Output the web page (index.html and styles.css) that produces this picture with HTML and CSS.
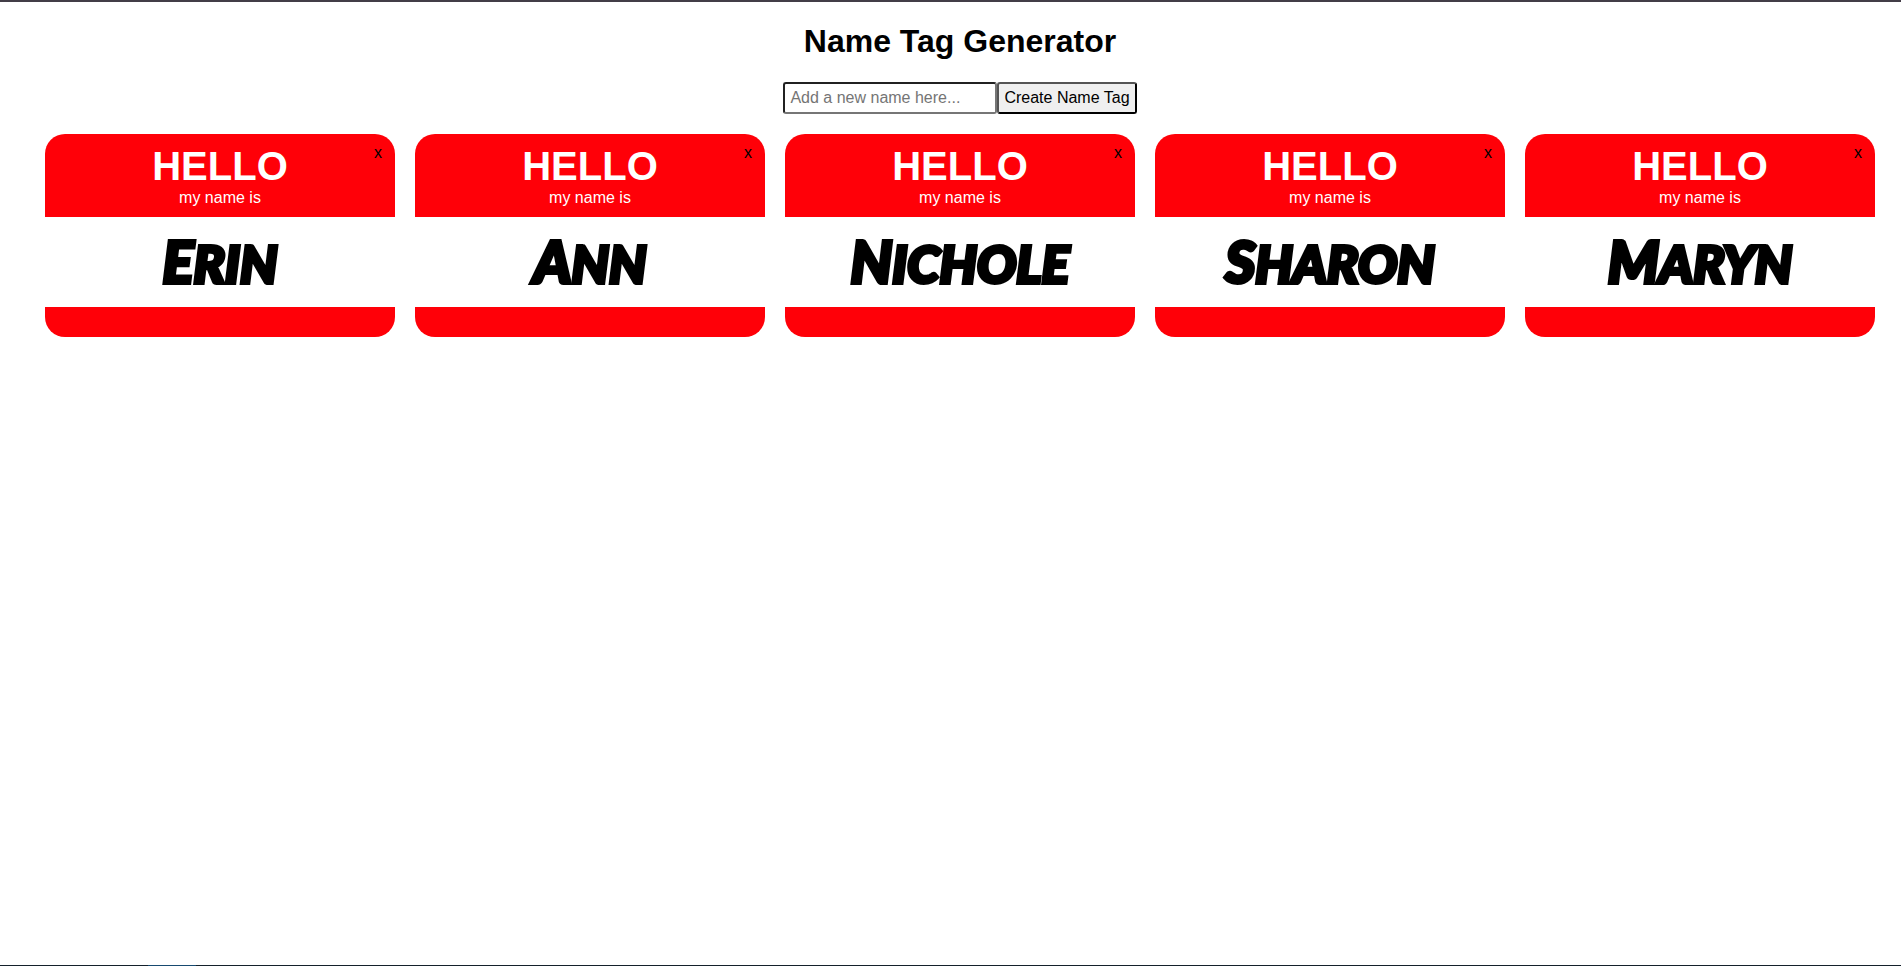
FILE: index.html
```
<!DOCTYPE html>
<html lang="en">
<head>
<meta charset="utf-8">
<title>Name Tag Generator</title>
<link rel="stylesheet" href="styles.css">
</head>
<body>
<main class="app">
  <h1 class="title">Name Tag Generator</h1>
  <form class="add-form">
    <input class="add-input" type="text" aria-label="New name" placeholder="Add a new name here...">
    <button class="add-button" type="submit">Create Name Tag</button>
  </form>
  <section class="tags">
    <article class="tag">
      <header class="tag-header"><button class="tag-remove" type="button" aria-label="Remove Erin">x</button><h2 class="hello">HELLO</h2><p class="intro">my name is</p></header>
      <p class="name">Erin</p>
    </article>
    <article class="tag">
      <header class="tag-header"><button class="tag-remove" type="button" aria-label="Remove Ann">x</button><h2 class="hello">HELLO</h2><p class="intro">my name is</p></header>
      <p class="name">Ann</p>
    </article>
    <article class="tag">
      <header class="tag-header"><button class="tag-remove" type="button" aria-label="Remove Nichole">x</button><h2 class="hello">HELLO</h2><p class="intro">my name is</p></header>
      <p class="name">Nichole</p>
    </article>
    <article class="tag">
      <header class="tag-header"><button class="tag-remove" type="button" aria-label="Remove Sharon">x</button><h2 class="hello">HELLO</h2><p class="intro">my name is</p></header>
      <p class="name">Sharon</p>
    </article>
    <article class="tag">
      <header class="tag-header"><button class="tag-remove" type="button" aria-label="Remove Maryn">x</button><h2 class="hello">HELLO</h2><p class="intro">my name is</p></header>
      <p class="name">Maryn</p>
    </article>
  </section>
</main>
<div class="edge"></div>
</body>
</html>
```
FILE: styles.css
```
* { box-sizing: border-box; }

body {
  margin: 0;
  min-height: 100vh;
  display: flex;
  flex-direction: column;
  border-top: 2px solid #433d47;
  background: #fff;
  color: #000;
  font-family: "Liberation Sans", Arial, sans-serif;
  font-size: 16px;
}

.app {
  flex: 1;
  padding: 20px 0 20px 19px;
}

.title {
  margin: 0 0 22px;
  font-size: 32px;
  line-height: 38px;
  text-align: center;
}

.add-form {
  display: flex;
  justify-content: center;
  margin-bottom: 20px;
}

.add-input,
.add-button {
  height: 32px;
  border-width: 2px;
  border-radius: 3px;
  font: inherit;
}

.add-input {
  width: 214px;
  padding: 5px;
  border-style: inset;
  border-color: #767676;
  background: #fff;
}

.add-input::placeholder { color: #757575; }

.add-button {
  padding: 5px;
  border-style: outset;
  border-color: #000;
  background: #efefef;
  color: #000;
}

.tags {
  display: flex;
  flex-wrap: wrap;
  justify-content: center;
  gap: 20px;
}

.tag {
  width: 350px;
  padding-bottom: 30px;
  border-radius: 20px;
  background: #ff0008;
}

.tag-header {
  position: relative;
  padding: 10px 0;
  color: #fff;
  text-align: center;
}

.hello {
  margin: 0;
  font-size: 40px;
  line-height: 44px;
}

.intro {
  margin: 0;
  line-height: 19px;
}

.tag-remove {
  position: absolute;
  top: 10px;
  right: 13px;
  padding: 0;
  border: 0;
  background: none;
  color: #000;
  font: inherit;
}

.name {
  height: 90px;
  margin: 0;
  background: #fff;
  font-family: Lato, "Open Sans", sans-serif;
  font-size: 52px;
  font-style: italic;
  font-weight: 900;
  line-height: 88px;
  text-align: center;
  text-transform: uppercase;
  -webkit-text-stroke: 4px #000;
}

.name::first-letter { font-size: 58px; }

.edge {
  height: 1px;
  background: linear-gradient(90deg, #14212b 148px, #174a70 148px, #174a70 196px, #14212b 196px);
}
```
